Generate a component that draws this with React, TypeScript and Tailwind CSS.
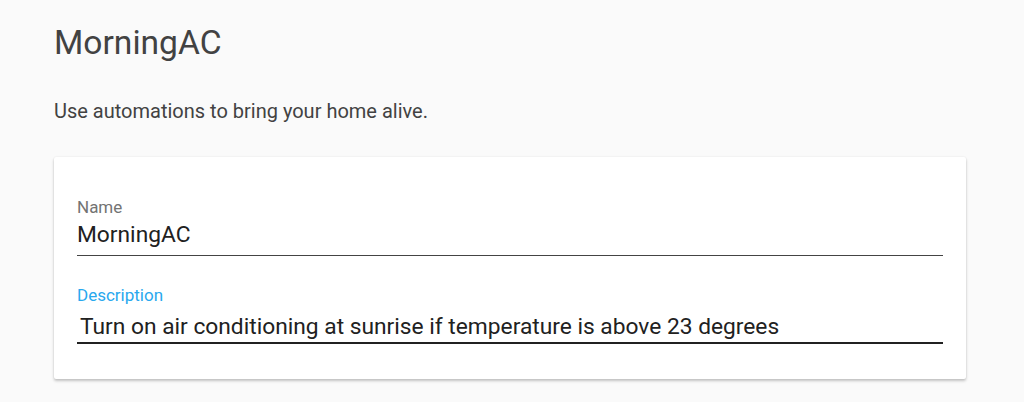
export default function App() {
  return (
    <div className="min-h-[402px] w-[1024px] bg-[#fafafa] pl-[54px] pr-[58px] pt-[23px] font-['Roboto',sans-serif]">
      {/* Header */}
      <h1 className="text-[33.6px] leading-[40px] font-normal text-[#424242]">MorningAC</h1>
      <p className="mt-[36px] text-[20px] leading-[24px] text-[#424242]">Use automations to bring your home alive.</p>

      {/* Card */}
      <div className="mt-[34px] rounded-[2px] bg-white px-[23px] pt-[40px] pb-[35px] shadow-[0_2px_3px_rgba(0,0,0,0.22),0_0_2px_rgba(0,0,0,0.08)]">
        <div className="flex flex-col">
          <label className="text-[17px] leading-[20px] text-[#737373]">Name</label>
          <div className="mt-[4px] border-b border-[#444] pb-[6px] text-[22.75px] leading-[28px] text-[#212121]">MorningAC</div>
        </div>
        <div className="mt-[29px] flex flex-col">
          <label className="text-[17px] leading-[20px] text-[#29a8ee]">Description</label>
          <div className="mt-[8px] border-b-2 border-[#212121] pb-[1px] pl-[3px] text-[22.75px] leading-[28px] text-[#212121]">
            Turn on air conditioning at sunrise if temperature is above 23 degrees
          </div>
        </div>
      </div>
    </div>
  );
}
